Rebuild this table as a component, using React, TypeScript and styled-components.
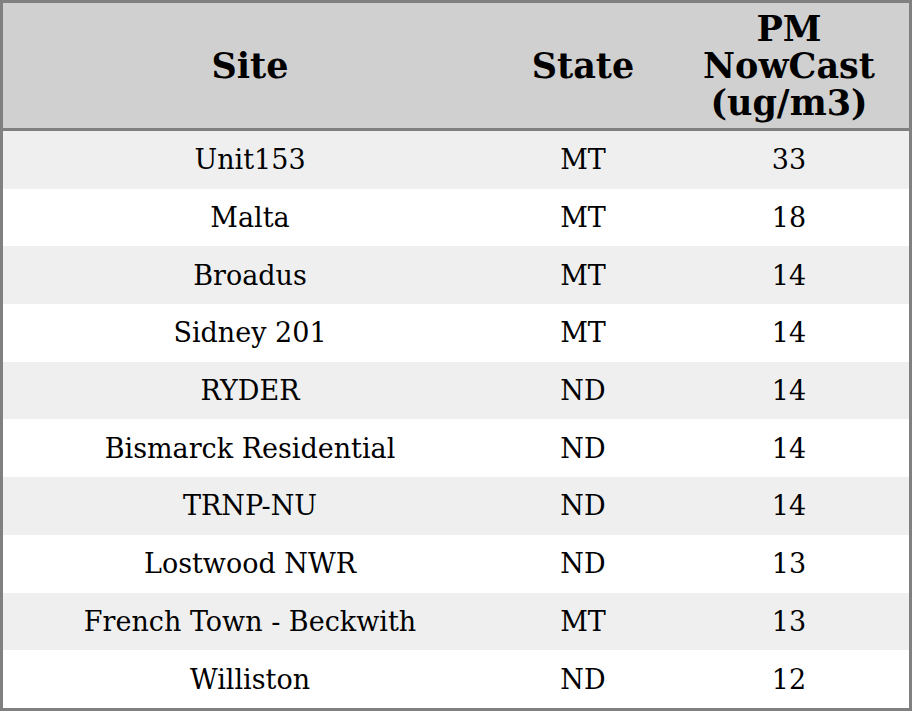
import React from 'react'
import styled, { createGlobalStyle } from 'styled-components'

interface Row {
  site: string
  state: string
  pm: number
}

const rows: Row[] = [
  { site: 'Unit153', state: 'MT', pm: 33 },
  { site: 'Malta', state: 'MT', pm: 18 },
  { site: 'Broadus', state: 'MT', pm: 14 },
  { site: 'Sidney 201', state: 'MT', pm: 14 },
  { site: 'RYDER', state: 'ND', pm: 14 },
  { site: 'Bismarck Residential', state: 'ND', pm: 14 },
  { site: 'TRNP-NU', state: 'ND', pm: 14 },
  { site: 'Lostwood NWR', state: 'ND', pm: 13 },
  { site: 'French Town - Beckwith', state: 'MT', pm: 13 },
  { site: 'Williston', state: 'ND', pm: 12 },
]

export default function App() {
  return (
    <>
      <GlobalStyle />
      <Table>
        <colgroup>
          <col style={{ width: 494 }} />
          <col style={{ width: 172 }} />
          <col style={{ width: 240 }} />
        </colgroup>
        <thead>
          <tr>
            <HeadCell>Site</HeadCell>
            <HeadCell>State</HeadCell>
            <HeadCell>
              <HeadLine>PM</HeadLine>
              <HeadLine>NowCast</HeadLine>
              <HeadLine>(ug/m3)</HeadLine>
            </HeadCell>
          </tr>
        </thead>
        <tbody>
          {rows.map((r, i) => (
            <BodyRow key={i} striped={i % 2 === 0}>
              <Cell>{r.site}</Cell>
              <Cell>{r.state}</Cell>
              <Cell>{r.pm}</Cell>
            </BodyRow>
          ))}
        </tbody>
      </Table>
    </>
  )
}

const GlobalStyle = createGlobalStyle`
  html, body {
    margin: 0;
    padding: 0;
    background: #fff;
  }
`

const Table = styled.table`
  width: 912px;
  height: 711px;
  box-sizing: border-box;
  border: 3px solid #808080;
  border-collapse: separate;
  border-spacing: 0;
  table-layout: fixed;
  font-family: 'DejaVu Serif', serif;
  color: #000;
`

const HeadCell = styled.th`
  height: 125px;
  padding: 0;
  background: #d0d0d0;
  border-bottom: 3px solid #808080;
  font-size: 35px;
  font-weight: bold;
  line-height: 37px;
  text-align: center;
  vertical-align: middle;
`

const HeadLine = styled.div`
  line-height: 37px;
`

const BodyRow = styled.tr<{ striped: boolean }>`
  background: ${({ striped }) => (striped ? '#efefef' : '#ffffff')};
`

const Cell = styled.td`
  height: 57.7px;
  padding: 0;
  font-size: 27px;
  text-align: center;
  vertical-align: middle;
`
